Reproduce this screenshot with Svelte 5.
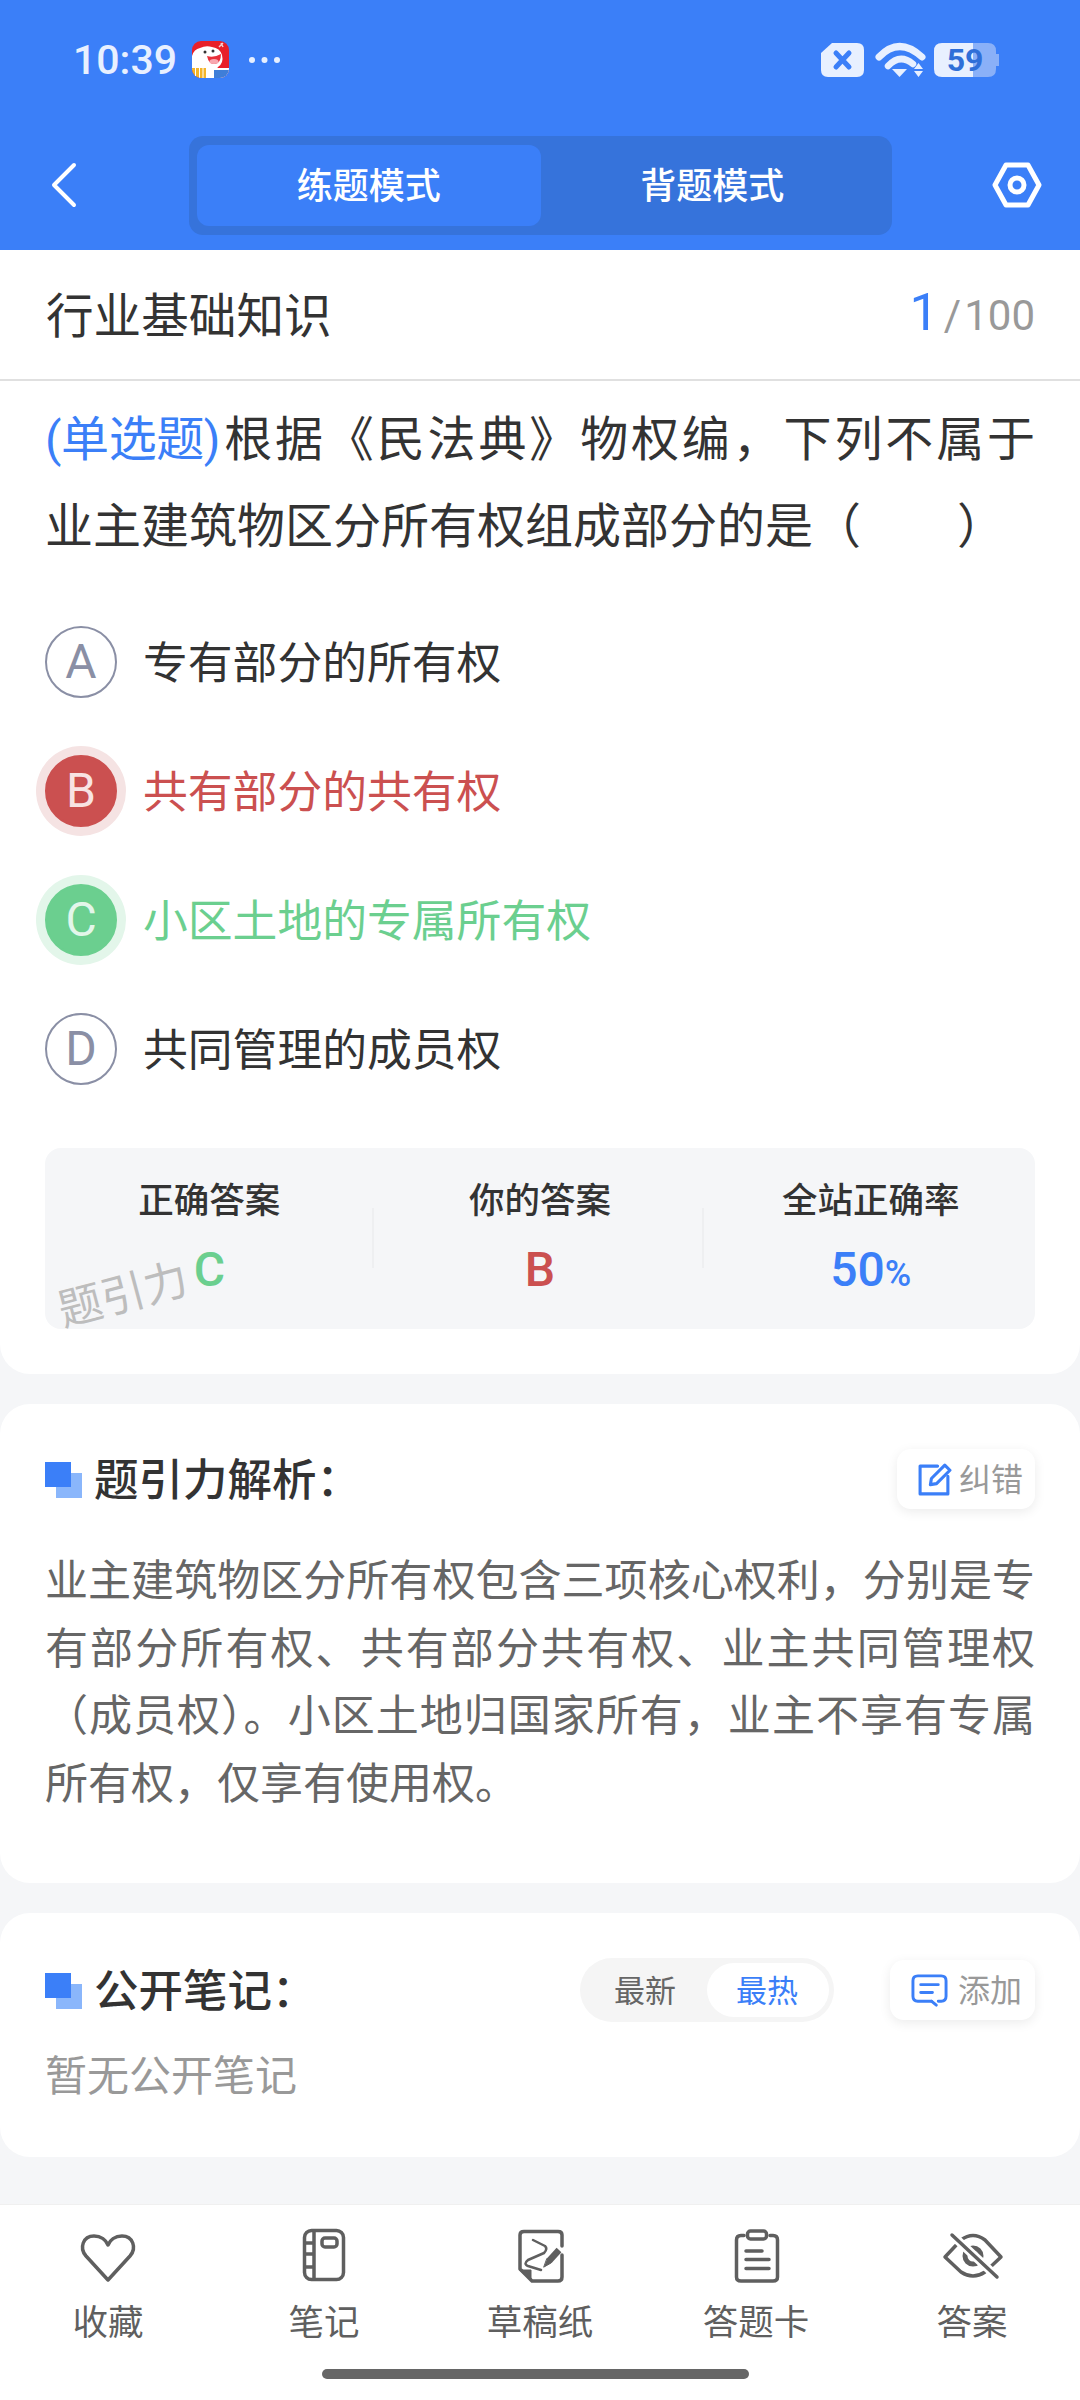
<script>
  const options = [
    { key: 'A', text: '专有部分的所有权', state: '' },
    { key: 'B', text: '共有部分的共有权', state: 'wrong' },
    { key: 'C', text: '小区土地的专属所有权', state: 'right' },
    { key: 'D', text: '共同管理的成员权', state: '' }
  ];
</script>

<div class="app">
  <header class="top">
    <div class="status">
      <span class="time">10:39</span>
      <svg class="appicon" viewBox="0 0 37 37">
        <defs>
          <clipPath id="round"><rect width="37" height="37" rx="9" /></clipPath>
        </defs>
        <g clip-path="url(#round)">
          <rect width="37" height="37" fill="#e8202a" />
          <path d="M0 15 Q2 8 8 7 Q14 4 20 6 Q28 7 30 14 Q32 22 26 26 L24 29 H0 Z" fill="#fff" />
          <path d="M15 15 Q22 17 29 13 Q29 22 23 23 Q17 24 15 15 Z" fill="#e8303a" />
          <ellipse cx="22" cy="20.500" rx="4.500" ry="2.500" fill="#f8a8b0" />
          <circle cx="13" cy="11" r="1.500" fill="#333" />
          <circle cx="21" cy="10" r="1.500" fill="#333" />
          <path d="M27 6 L31 2 M29 2 L31 6" stroke="#f3d0d0" stroke-width="1.500" />
          <rect x="14" y="27" width="23" height="10" fill="#fff" />
          <path d="M0 27 H14 V37 H0 Z" fill="#f4b52a" />
          <path d="M3.500 27 V37 M7.500 27 V37 M11 27 V37" stroke="#fff" stroke-width="1" />
          <rect x="22" y="29" width="15" height="8" fill="#3f7ed8" />
        </g>
      </svg>
      <svg class="dots" viewBox="0 0 36 6"><circle cx="3" cy="3" r="3" /><circle cx="15.500" cy="3" r="3" /><circle cx="28" cy="3" r="3" /></svg>
      <svg class="sysicons" viewBox="0 0 180 36">
        <path d="M12 1 H37 Q44 1 44 8 V28 Q44 35 37 35 H8 Q1 35 1 28 V11 Z" fill="#e8f0ff" />
        <path d="M16 11 L29 25 M29 11 L16 25" stroke="#3b7ff8" stroke-width="5" stroke-linecap="round" />
        <path d="M59 15 Q79 -6 102 15" fill="none" stroke="#e8f0ff" stroke-width="7" stroke-linecap="round" />
        <path d="M68 24 Q80 11 93 22" fill="none" stroke="#e8f0ff" stroke-width="6.500" stroke-linecap="round" />
        <path d="M72 27 L87 27 L79.500 35 Z" fill="#e8f0ff" />
        <path d="M94 27 L103 27 L98.500 21 Z M94 29 L103 29 L98.500 35 Z" fill="#e8f0ff" />
        <path d="M130 1 H168 Q176 1 176 9 V12 H179 V24 H176 V27 Q176 35 168 35 H130 Z" fill="#8ab0f8" />
        <path d="M153 1 H122 Q114 1 114 9 V27 Q114 35 122 35 H153 Z" fill="#e8f0ff" />
        <text x="145" y="29" text-anchor="middle" class="batt">59</text>
      </svg>
    </div>
    <div class="nav">
      <svg class="back" viewBox="0 0 28 46"><path d="M24 3 L4 23 L24 43" /></svg>
      <div class="segment">
        <div class="seg active">练题模式</div>
        <div class="seg">背题模式</div>
      </div>
      <svg class="hex" viewBox="0 0 52 48">
        <path d="M4 24 L15 4 H37 L48 24 L37 44 H15 Z" />
        <circle cx="26" cy="24" r="7" />
      </svg>
    </div>
  </header>

  <section class="card first">
    <div class="titlerow">
      <span class="subject">行业基础知识</span>
      <span class="count"><b>1</b><i>/</i>100</span>
    </div>
    <div class="question">
      <div class="q1"><span class="qtype">(单选题)</span><span class="qrest">根据《民法典》物权编，下列不属于</span></div>
      <div>业主建筑物区分所有权组成部分的是（　　）</div>
    </div>
    <div class="options">
      {#each options as o}
        <div class="option {o.state}">
          <span class="badge">{o.key}</span>
          <span class="otext">{o.text}</span>
        </div>
      {/each}
    </div>
    <div class="stats">
      <div class="stat"><div class="slabel">正确答案</div><div class="sval green">C</div></div>
      <div class="vline"></div>
      <div class="stat"><div class="slabel">你的答案</div><div class="sval red">B</div></div>
      <div class="vline"></div>
      <div class="stat"><div class="slabel">全站正确率</div><div class="sval blue">50<small>%</small></div></div>
      <div class="watermark">题引力</div>
    </div>
  </section>

  <section class="card">
    <div class="sechead">
      <span class="mark"></span>
      <h2>题引力解析：</h2>
      <div class="chip">
        <svg viewBox="0 0 34 34"><path d="M20 4 H3 V31 H30 V14" /><path d="M13 22 L14 16 L27 3 L32 8 L19 21 Z" /></svg>
        <span>纠错</span>
      </div>
    </div>
    <p class="analysis">业主建筑物区分所有权包含三项核心权利，分别是专有部分所有权、共有部分共有权、业主共同管理权（成员权）。小区土地归国家所有，业主不享有专属所有权，仅享有使用权。</p>
  </section>

  <section class="card notes">
    <div class="sechead tall">
      <span class="mark"></span>
      <h2>公开笔记：</h2>
      <div class="pill">
        <span class="pitem">最新</span>
        <span class="pitem on">最热</span>
      </div>
      <div class="chip add">
        <svg viewBox="0 0 38 34"><path d="M21 28 H7 Q2 28 2 23 V7 Q2 2 7 2 H31 Q36 2 36 7 V23 Q36 28 31 28 H28" /><path d="M21 28 L26 32" /><path d="M10 11 H28 M10 19 H22" /></svg>
        <span>添加</span>
      </div>
    </div>
    <div class="empty">暂无公开笔记</div>
  </section>

  <nav class="bottom">
    <div class="tabs">
      <div class="tab">
        <svg viewBox="0 0 60 60"><path d="M30 55 L8 31 C1 23 5 11 16 11 C23 11 28 15 30 20 C32 15 37 11 44 11 C55 11 59 23 52 31 Z" /></svg>
        <span>收藏</span>
      </div>
      <div class="tab">
        <svg viewBox="0 0 60 60">
          <rect x="10.500" y="5.500" width="39" height="49" rx="7" />
          <path d="M20 6 V54 M11 18 H20 M11 29 H20 M11 42 H20" />
          <rect x="28" y="13" width="15" height="9" rx="3" />
        </svg>
        <span>笔记</span>
      </div>
      <div class="tab">
        <svg viewBox="0 0 60 60">
          <path d="M52 21 V10 Q52 6.500 48 6.500 H14 Q10 6.500 10 10 V44 L22 56 H48 Q52 56 52 52 V30" />
          <path d="M10 45 H21 V55 Z" class="solid" />
          <path class="thin" d="M23 15 L35 21 Q38 24 34 28 L18 35 Q13 39 18 41 L31 45" />
          <path class="pen" d="M49 25 L39 36" />
          <path class="solid" d="M37 34 L41 38 L34 42 Z" />
        </svg>
        <span>草稿纸</span>
      </div>
      <div class="tab">
        <svg viewBox="0 0 60 60">
          <path d="M18 10.500 H15 Q10.500 10.500 10.500 15 V52 Q10.500 56 15 56 H47 Q51.500 56 51.500 52 V15 Q51.500 10.500 47 10.500 H44" />
          <rect x="21.500" y="6" width="19" height="8" rx="3" />
          <path d="M20 26 H36 M20 34.500 H43 M20 43.500 H43" />
        </svg>
        <span>答题卡</span>
      </div>
      <div class="tab">
        <svg viewBox="0 0 60 60" class="eye">
          <path d="M3 32 L19 15 Q31 6 43 15 L59 32 L43 47 Q31 55 19 47 Z" />
          <circle cx="31" cy="31" r="8" class="pupil" />
          <path d="M10 10 L55 52" class="mask" />
          <path d="M10 10 L55 52" />
        </svg>
        <span>答案</span>
      </div>
    </div>
    <div class="homebar"></div>
  </nav>
</div>

<style>
  :global(body) {
    margin: 0;
  }
  .app {
    width: 1080px;
    height: 2400px;
    background: #f5f6f8;
    display: flex;
    flex-direction: column;
    overflow: hidden;
    font-family: Roboto, "Noto Sans CJK SC", sans-serif;
    color: #333;
  }
  .top {
    height: 250px;
    background: #3b7ff8;
    flex: none;
  }
  .status {
    height: 119px;
    display: flex;
    align-items: center;
    padding: 0 80px 0 73px;
    box-sizing: border-box;
  }
  .time {
    font-size: 41px;
    font-weight: 500;
    color: #e8f0ff;
  }
  .appicon {
    width: 37px;
    height: 37px;
    margin-left: 15px;
  }
  .dots {
    width: 36px;
    height: 6px;
    margin-left: 20px;
    fill: #e8f0ff;
  }
  .sysicons {
    width: 180px;
    height: 36px;
    margin-left: auto;
  }
  .batt {
    font-family: Roboto, sans-serif;
    font-size: 32px;
    font-weight: 700;
    fill: #2f6fd8;
  }
  .nav {
    height: 99px;
    margin-top: 17px;
    display: flex;
    align-items: center;
    padding: 0 37px 0 50px;
  }
  .back {
    width: 28px;
    height: 46px;
    margin-bottom: 2px;
    fill: none;
    stroke: #fff;
    stroke-width: 4;
    stroke-linecap: round;
    stroke-linejoin: round;
  }
  .segment {
    width: 703px;
    height: 99px;
    margin-left: 111px;
    box-sizing: border-box;
    padding: 9px 8px;
    background: #3673db;
    border-radius: 14px;
    display: flex;
  }
  .seg {
    flex: 1;
    display: flex;
    align-items: center;
    justify-content: center;
    box-sizing: border-box;
    padding: 0 0 5px 0;
    color: #fff;
    font-size: 36px;
    font-weight: 500;
    border-radius: 12px;
  }
  .seg.active {
    background: #3b7ff8;
  }
  .hex {
    width: 52px;
    height: 48px;
    margin-left: auto;
    margin-bottom: 2px;
    fill: none;
    stroke: #fff;
    stroke-width: 5;
    stroke-linejoin: round;
  }
  .card {
    background: #fff;
    border-radius: 30px;
    margin-top: 30px;
    padding: 45px 45px 65px;
    flex: none;
  }
  .card.first {
    margin-top: 0;
    padding: 0 0 45px;
    border-radius: 0 0 30px 30px;
  }
  .card.notes {
    padding-bottom: 50px;
  }
  .titlerow {
    height: 131px;
    box-sizing: border-box;
    border-bottom: 2px solid #e0e0e0;
    padding: 0 45px 5px 46px;
    display: flex;
    align-items: center;
    justify-content: space-between;
  }
  .subject {
    font-size: 47.600px;
    color: #333;
  }
  .count {
    font-size: 42px;
    color: #999;
    display: flex;
    align-items: baseline;
  }
  .count b {
    font-weight: 400;
    font-size: 52px;
    color: #3b7ff8;
  }
  .count i {
    font-style: normal;
    margin: 0 3px 0 5px;
  }
  .question {
    margin: 15px 45px 0 45px;
    font-size: 48px;
    line-height: 87px;
    color: #333;
  }
  .q1 {
    display: flex;
    white-space: nowrap;
  }
  .qtype {
    color: #3b7ff8;
    margin-right: 4px;
    letter-spacing: -0.400px;
  }
  .qrest {
    flex: 1;
    text-align: justify;
    text-align-last: justify;
  }
  .options {
    margin-top: 27px;
    padding: 0 45px;
  }
  .option {
    height: 129px;
    display: flex;
    align-items: center;
  }
  .badge {
    width: 72px;
    height: 72px;
    box-sizing: border-box;
    border: 2px solid #8a8fa5;
    border-radius: 50%;
    display: flex;
    align-items: center;
    justify-content: center;
    font-size: 48px;
    color: #8a8fa5;
  }
  .otext {
    margin: 0 0 5px 26px;
    font-size: 44.800px;
  }
  .wrong .badge {
    background: #cb5050;
    border-color: #cb5050;
    color: #f8e3e3;
    box-shadow: 0 0 0 9px #f5e3e3;
  }
  .wrong .otext {
    color: #cb5050;
  }
  .right .badge {
    background: #6bcf8f;
    border-color: #6bcf8f;
    color: #e3f6ea;
    box-shadow: 0 0 0 9px #e3f6ea;
  }
  .right .otext {
    color: #6bcf8f;
  }
  .stats {
    position: relative;
    margin: 35px 45px 0;
    height: 181px;
    background: #f5f6f8;
    border-radius: 16px;
    display: flex;
    box-sizing: border-box;
    padding-top: 28px;
  }
  .stat {
    flex: 1;
    text-align: center;
  }
  .vline {
    width: 2px;
    height: 60px;
    margin: 32px 2px 0 -2px;
    background: #eeeff1;
  }
  .slabel {
    font-size: 35.500px;
    font-weight: 500;
    line-height: 50px;
    color: #333;
  }
  .sval {
    margin-top: 19px;
    font-size: 48px;
    font-weight: 500;
    line-height: 50px;
  }
  .sval small {
    font-size: 36px;
  }
  .green {
    color: #6bcf8f;
  }
  .red {
    color: #cb5050;
  }
  .blue {
    color: #3b7ff8;
  }
  .watermark {
    position: absolute;
    left: 12px;
    top: 122px;
    font-size: 44px;
    line-height: 50px;
    color: #bdbdbd;
    transform: rotate(-15deg);
    white-space: nowrap;
  }
  .sechead {
    display: flex;
    align-items: center;
    height: 60px;
  }
  .sechead.tall {
    height: 64px;
  }
  .mark {
    width: 37px;
    height: 36px;
    flex: none;
    position: relative;
    margin-top: 2px;
  }
  .mark::before,
  .mark::after {
    content: "";
    position: absolute;
    width: 26px;
    height: 25px;
  }
  .mark::after {
    left: 0;
    top: 0;
    background: #3b7ff8;
  }
  .mark::before {
    right: 0;
    bottom: 0;
    background: #8ab6fb;
  }
  h2 {
    margin: 3px 0 0 12px;
    font-size: 44.500px;
    font-weight: 500;
    color: #333;
    line-height: 60px;
  }
  .chip {
    margin-left: auto;
    width: 138px;
    height: 60px;
    box-sizing: border-box;
    border-radius: 14px;
    background: #fff;
    box-shadow: 0 3px 12px rgba(0, 0, 0, 0.08);
    display: flex;
    align-items: center;
    padding: 0 0 4px 20px;
    gap: 7px;
    font-size: 32px;
    color: #999;
  }
  .chip svg {
    width: 35px;
    height: 35px;
    margin: 4px 0 0;
    fill: none;
    stroke: #3b7ff8;
    stroke-width: 3;
    stroke-linejoin: round;
    stroke-linecap: round;
    flex: none;
  }
  .chip.add {
    width: 145px;
    gap: 10px;
    padding-left: 21px;
  }
  .chip.add svg {
    width: 37px;
  }
  .analysis {
    margin: 39px 0 0;
    font-size: 43px;
    line-height: 67.500px;
    color: #666;
    text-align: justify;
  }
  .pill {
    margin-left: auto;
    width: 254px;
    height: 64px;
    border-radius: 32px;
    background: #f5f5f5;
    box-sizing: border-box;
    padding: 5px;
    display: flex;
    justify-content: flex-end;
    font-size: 31px;
    color: #666;
  }
  .pitem {
    width: 122px;
    box-sizing: border-box;
    padding: 0 2px 3px 0;
    display: flex;
    align-items: center;
    justify-content: center;
    border-radius: 27px;
  }
  .pitem.on {
    background: #fff;
    color: #3b7ff8;
  }
  .pill + .chip {
    margin-left: 56px;
  }
  .empty {
    margin-top: 25px;
    font-size: 42px;
    line-height: 60px;
    color: #999;
  }
  .bottom {
    margin-top: auto;
    height: 196px;
    background: #fff;
    border-top: 1px solid #f0f0f0;
    box-sizing: border-box;
    display: flex;
    flex-direction: column;
    align-items: center;
  }
  .tabs {
    width: 100%;
    display: flex;
    padding-top: 20px;
  }
  .tab {
    flex: 1;
    display: flex;
    flex-direction: column;
    align-items: center;
    font-size: 35.500px;
    line-height: 50px;
    color: #5f5f5f;
  }
  .tab svg {
    width: 60px;
    height: 60px;
    margin-bottom: 13px;
    overflow: visible;
    fill: none;
    stroke: #5f5f5f;
    stroke-width: 3.500;
    stroke-linecap: round;
    stroke-linejoin: round;
  }
  .tab .solid {
    fill: #5f5f5f;
    stroke-width: 1;
  }
  .tab .thin {
    stroke-width: 2.500;
  }
  .tab .pen {
    stroke-width: 6.500;
    stroke-linecap: butt;
  }
  .tab .pupil {
    stroke-width: 5;
  }
  .tab .mask {
    stroke: #fff;
    stroke-width: 9;
  }
  .homebar {
    width: 427px;
    height: 10px;
    border-radius: 5px;
    background: #666;
    margin: 21px 9px 0 0;
  }
</style>
